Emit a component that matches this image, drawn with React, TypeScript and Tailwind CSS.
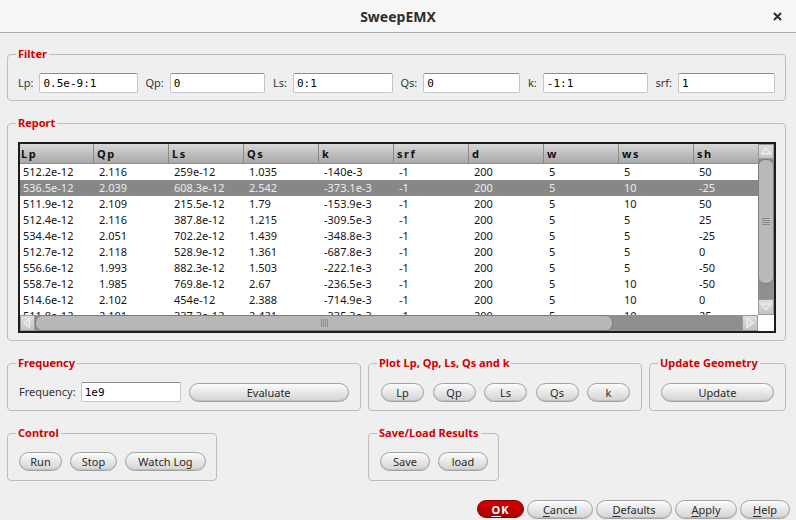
import React from "react";

const cols = ["Lp", "Qp", "Ls", "Qs", "k", "srf", "d", "w", "ws", "sh"];

const rows: string[][] = [
  ["512.2e-12", "2.116", "259e-12", "1.035", "-140e-3", "-1", "200", "5", "5", "50"],
  ["536.5e-12", "2.039", "608.3e-12", "2.542", "-373.1e-3", "-1", "200", "5", "10", "-25"],
  ["511.9e-12", "2.109", "215.5e-12", "1.79", "-153.9e-3", "-1", "200", "5", "10", "50"],
  ["512.4e-12", "2.116", "387.8e-12", "1.215", "-309.5e-3", "-1", "200", "5", "5", "25"],
  ["534.4e-12", "2.051", "702.2e-12", "1.439", "-348.8e-3", "-1", "200", "5", "5", "-25"],
  ["512.7e-12", "2.118", "528.9e-12", "1.361", "-687.8e-3", "-1", "200", "5", "5", "0"],
  ["556.6e-12", "1.993", "882.3e-12", "1.503", "-222.1e-3", "-1", "200", "5", "5", "-50"],
  ["558.7e-12", "1.985", "769.8e-12", "2.67", "-236.5e-3", "-1", "200", "5", "10", "-50"],
  ["514.6e-12", "2.102", "454e-12", "2.388", "-714.9e-3", "-1", "200", "5", "10", "0"],
  ["511.8e-12", "2.101", "337.3e-12", "2.421", "-335.3e-3", "-1", "200", "5", "10", "25"],
];

const filters = [
  { label: "Lp:", value: "0.5e-9:1" },
  { label: "Qp:", value: "0" },
  { label: "Ls:", value: "0:1" },
  { label: "Qs:", value: "0" },
  { label: "k:", value: "-1:1" },
  { label: "srf:", value: "1" },
];

const Group = ({
  title,
  className,
  children,
}: {
  title: string;
  className: string;
  children: React.ReactNode;
}) => (
  <fieldset
    className={
      "min-w-0 shrink-0 rounded-[4px] border border-[#bdbdbd] pl-[8px] pr-[8px] pt-[12px] " +
      className
    }
  >
    <legend className="px-[2px] text-[11px] font-bold leading-[14px] text-[#d40000]">
      {title}
    </legend>
    {children}
  </fieldset>
);

const Btn = ({ children, className }: { children: React.ReactNode; className: string }) => (
  <button
    className={
      "h-[19px] shrink-0 rounded-full border border-[#a3a3a3] bg-linear-to-b from-[#fcfcfc] to-[#d3d3d3] text-[11px] leading-none text-[#2b2b2b] shadow-[inset_0_-1px_0_#c0c0c0] " +
      className
    }
  >
    {children}
  </button>
);

const TextBox = ({ value, className }: { value: string; className: string }) => (
  <input
    readOnly
    value={value}
    className={
      "h-[20px] min-w-0 rounded-[2px] border border-[#c6c6c6] border-t-[#8e8e8e] bg-white px-[3px] font-['DejaVu_Sans_Mono',monospace] text-[11px] text-black outline-none " +
      className
    }
  />
);

const Arrow = ({ dir }: { dir: "up" | "down" | "left" | "right" }) => {
  const pts = {
    up: "2,9 7,3 12,9",
    down: "2,4 7,10 12,4",
    left: "9,2 3,7 9,12",
    right: "4,2 10,7 4,12",
  }[dir];
  return (
    <svg width="14" height="14" viewBox="0 0 14 14">
      <polygon points={pts} fill="#d9d9d9" stroke="#f7f7f7" strokeWidth="1" />
    </svg>
  );
};

const ArrowBtn = ({ dir, className }: { dir: "up" | "down" | "left" | "right"; className: string }) => (
  <div
    className={
      "flex shrink-0 items-center justify-center border border-[#9a9a9a] bg-linear-to-b from-[#dedede] to-[#c4c4c4] " +
      className
    }
  >
    <Arrow dir={dir} />
  </div>
);

const Report = () => (
  <div className="ml-[2px] flex h-[191px] w-[758px] flex-col border-2 border-[#1c1c1c] bg-white">
    <div className="flex h-[171px]">
      <div className="w-[738px] overflow-hidden">
        <div className="flex h-[20px] w-max border-b border-[#8c8c8c] bg-linear-to-b from-[#d8d8d8] to-[#a9a9a9]">
          {cols.map((c, i) => (
            <div
              key={c}
              className={
                "shrink-0 border-r border-[#8a8a8a] text-[11px] font-bold leading-[19px] tracking-[1.5px] text-[#111] " +
                (i === 0 ? "w-[74px] pl-[1px]" : "w-[75px] pl-[3px]")
              }
            >
              {c}
            </div>
          ))}
        </div>
        {rows.map((r, ri) => (
          <div
            key={ri}
            className={
              "flex h-[16px] w-max " +
              (ri === 1 ? "bg-[#878787] text-[#ececec]" : "text-[#151515]")
            }
          >
            {r.map((v, ci) => (
              <div
                key={ci}
                className={
                  "shrink-0 text-[11px] leading-[16px] " +
                  (ci === 0 ? "w-[74px] pl-[3px]" : "w-[75px] pl-[5px]")
                }
              >
                {v}
              </div>
            ))}
          </div>
        ))}
      </div>
      <div className="flex w-[16px] flex-col bg-[#8f8f8f]">
        <ArrowBtn dir="up" className="h-[15px]" />
        <div className="flex h-[125px] items-center justify-center rounded-[7px] border border-[#7c7c7c] bg-[#b9b9b9]">
          <svg width="8" height="7" viewBox="0 0 8 7">
            <path d="M0 0.5H8M0 2.5H8M0 4.5H8M0 6.5H8" stroke="#8a8a8a" strokeWidth="1" />
          </svg>
        </div>
        <div className="h-[15px]" />
        <ArrowBtn dir="down" className="h-[16px]" />
      </div>
    </div>
    <div className="flex h-[16px]">
      <div className="flex w-[738px] bg-[#8f8f8f]">
        <ArrowBtn dir="left" className="w-[15px]" />
        <div className="flex w-[578px] items-center justify-center rounded-[7px] border border-[#7c7c7c] bg-[#b7b7b7]">
          <svg width="7" height="8" viewBox="0 0 7 8">
            <path d="M0.5 0V8M2.5 0V8M4.5 0V8M6.5 0V8" stroke="#8a8a8a" strokeWidth="1" />
          </svg>
        </div>
        <div className="w-[129px]" />
        <ArrowBtn dir="right" className="w-[16px]" />
      </div>
      <div className="w-[16px] bg-white" />
    </div>
  </div>
);

const U = ({ c }: { c: string }) => <span className="underline underline-offset-2">{c}</span>;

export default function App() {
  return (
    <div className="flex h-[520px] w-[796px] flex-col overflow-hidden bg-[#efefef] font-['Noto_Sans',sans-serif] text-[#2e2e2e]">
      <div className="relative flex h-[33px] shrink-0 items-center justify-center border-b border-[#a9a9a9] bg-[#f6f6f6]">
        <span className="text-[14px] font-bold text-[#2e2e2e]">SweepEMX</span>
        <svg className="absolute right-[14px] top-[12px]" width="9" height="9" viewBox="0 0 9 9">
          <path d="M1 1L8 8M8 1L1 8" stroke="#2e2e2e" strokeWidth="2" />
        </svg>
      </div>

      <div className="flex flex-col pl-[7px]">
        <Group title="Filter" className="mt-[14px] w-[779px] pb-[7px]">
          <div className="ml-[2px] grid w-[757px] grid-cols-6 gap-x-[8px]">
            {filters.map((f) => (
              <div key={f.label} className="flex items-center gap-[6px]">
                <span className="text-[11px] text-[#333]">{f.label}</span>
                <TextBox value={f.value} className="w-full flex-1" />
              </div>
            ))}
          </div>
        </Group>

        <Group title="Report" className="mt-[15px] w-[779px] pb-[7px]">
          <Report />
        </Group>

        <div className="mt-[15px] flex gap-[7px]">
          <Group title="Frequency" className="w-[354px] pb-[8px]">
            <div className="ml-[3px] flex h-[20px] items-center">
              <span className="text-[11px] text-[#333]">Frequency:</span>
              <TextBox value="1e9" className="ml-[5px] w-[100px]" />
              <Btn className="ml-[8px] w-[160px]">Evaluate</Btn>
            </div>
          </Group>
          <Group title="Plot Lp, Qp, Ls, Qs and k" className="w-[274px] pb-[8px]">
            <div className="ml-[4px] flex h-[20px] items-center gap-[8.5px]">
              {["Lp", "Qp", "Ls", "Qs", "k"].map((b) => (
                <Btn key={b} className="w-[43px]">
                  {b}
                </Btn>
              ))}
            </div>
          </Group>
          <Group title="Update Geometry" className="w-[137px] pb-[8px]">
            <div className="ml-[3px] flex h-[20px] items-center">
              <Btn className="w-[113px]">Update</Btn>
            </div>
          </Group>
        </div>

        <div className="mt-[15px] flex">
          <Group title="Control" className="w-[210px] pb-[9px]">
            <div className="ml-[3px] flex gap-[8px]">
              <Btn className="w-[43px]">Run</Btn>
              <Btn className="w-[47px]">Stop</Btn>
              <Btn className="w-[81px]">Watch Log</Btn>
            </div>
          </Group>
          <Group title="Save/Load Results" className="ml-[151px] w-[131px] pb-[9px]">
            <div className="ml-[3px] flex gap-[8px]">
              <Btn className="w-[50px]">Save</Btn>
              <Btn className="w-[50px]">load</Btn>
            </div>
          </Group>
        </div>
      </div>

      <div className="mt-[19px] flex justify-end gap-[3px] pr-[6px]">
        <button className="h-[18px] w-[47px] rounded-full border border-[#7a0000] bg-linear-to-b from-[#d40000] to-[#a80000] text-[11px] font-bold leading-none tracking-[1px] text-white">
          <U c="O" />K
        </button>
        <Btn className="h-[18px] w-[66px]">
          <U c="C" />ancel
        </Btn>
        <Btn className="h-[18px] w-[76px]">
          <U c="D" />efaults
        </Btn>
        <Btn className="h-[18px] w-[62px]">
          <U c="A" />pply
        </Btn>
        <Btn className="h-[18px] w-[50px]">
          <U c="H" />elp
        </Btn>
      </div>
    </div>
  );
}
